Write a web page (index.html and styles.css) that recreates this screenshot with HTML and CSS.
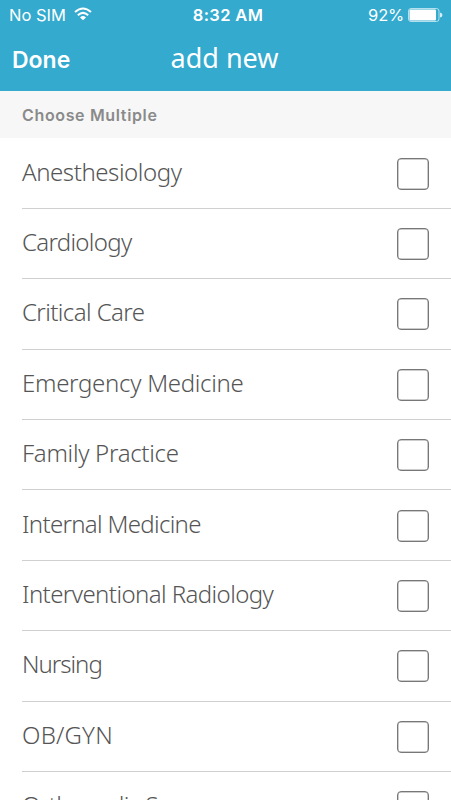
FILE: index.html
```html
<!DOCTYPE html>
<html lang="en"><head><meta charset="utf-8"><title>add new</title><link rel="stylesheet" href="styles.css"></head>
<body>
<header class="header">
<div class="status"><div class="carrier"><span class="t-sim">No SIM</span>
<svg class="wifi" width="18" height="14" viewBox="0 0 18 14" fill="none" stroke="#fff" stroke-width="2"><path d="M1 5Q9-2 17 5M3.8 8.2Q9 3.6 14.2 8.2"/><path d="M6 10.4Q9 7.8 12 10.4L9 13.3Z" fill="#fff" stroke="none"/></svg></div>
<span class="clock">8:32 AM</span>
<div class="power"><span class="percent">92%</span><svg width="35" height="14" viewBox="0 0 35 14"><rect x=".5" y=".5" width="30.5" height="13" rx="2.5" fill="none" stroke="#b5e0ee"/><rect x="1.5" y="1.5" width="26.5" height="11" rx="1" fill="#fff"/><path d="M32 4.5Q34.5 5 34.5 7T32 9.5Z" fill="#d5eef6"/></svg></div></div>
<nav class="nav"><span class="done">Done</span><h1>add new</h1><span></span></nav>
</header>
<h2 class="section">Choose Multiple</h2>
<ul class="list">
<li><span class="snug">Anesthesiology</span><i class="box"></i></li>
<li><span class="tight">Cardiology</span><i class="box"></i></li>
<li><span class="close">Critical Care</span><i class="box"></i></li>
<li><span class="slight">Emergency Medicine</span><i class="box"></i></li>
<li><span class="slight">Family Practice</span><i class="box"></i></li>
<li><span class="tight">Internal Medicine</span><i class="box"></i></li>
<li><span class="close">Interventional Radiology</span><i class="box"></i></li>
<li><span class="tighter">Nursing</span><i class="box"></i></li>
<li><span class="loose">OB/GYN</span><i class="box"></i></li>
<li><span class="close">Orthopedic Surgery</span><i class="box"></i></li>
</ul>
</body></html>
```
FILE: styles.css
```css
*{box-sizing:border-box}
body{margin:0;height:800px;overflow:hidden;background:#fff;font-family:Inter,sans-serif;color:#666}
.header{height:91px;background:#33aace;color:#fff}
.status{height:30px;display:grid;grid-template-columns:1fr auto 1fr;align-items:center;padding:0 8px 0 9px;font-size:16.5px}
.carrier,.power{display:flex;align-items:center;gap:8px}
.carrier svg{margin-top:-2px}
.power{justify-content:flex-end;gap:4px}
.percent{letter-spacing:-.2px}
.clock{font-weight:600;letter-spacing:.35px;margin-left:4px}
.nav{height:58px;display:grid;grid-template-columns:1fr auto 1fr;align-items:center;padding:0 12px}
.done{font-size:23px;font-weight:600;margin-top:1px}
h1{margin:0 2px 2px 0;font:400 27px/40px "Noto Sans",sans-serif}
.section{margin:0;height:47px;padding-left:22px;background:#f7f7f7;color:#8a8a8a;font-size:16px;font-weight:600;line-height:49px;letter-spacing:.65px}
.list{list-style:none;margin:0;padding:.5px 0 0 22px}
.list li{height:70.4px;display:flex;align-items:center;justify-content:space-between;padding-right:22px;border-bottom:1px solid #d0d0d0;font:300 24px/32px "Noto Sans",sans-serif}
.list span{margin-top:-3px;color:#555}
.snug{letter-spacing:-.43px}
.slight{letter-spacing:-.29px}
.close{letter-spacing:-.58px}
.tight{letter-spacing:-.68px}
.tighter{letter-spacing:-1px}
.loose{letter-spacing:.2px}
.box{width:32px;height:32px;margin-top:1px;border:1.5px solid #777;border-radius:4px;box-shadow:inset 0 0 0 .5px #999}
```
